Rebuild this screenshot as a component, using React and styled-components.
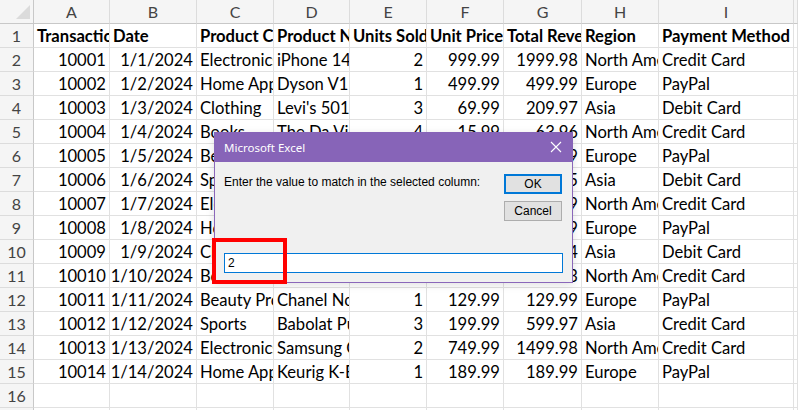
import styled, { createGlobalStyle } from 'styled-components';

const GlobalStyle = createGlobalStyle`
	html, body {
		margin: 0;
		padding: 0;
		background: #fff;
	}
	body {
		width: 798px;
		height: 410px;
		overflow: hidden;
	}
`;

const columns = ['A', 'B', 'C', 'D', 'E', 'F', 'G', 'H', 'I'];

// right aligned columns (numbers and dates)
const numericCols = [0, 1, 4, 5, 6];

const headers = [
	'Transaction ID',
	'Date',
	'Product Category',
	'Product Name',
	'Units Sold',
	'Unit Price',
	'Total Revenue',
	'Region',
	'Payment Method',
];

const rows = [
	['10001', '1/1/2024', 'Electronics', 'iPhone 14 Pro', '2', '999.99', '1999.98', 'North America', 'Credit Card'],
	['10002', '1/2/2024', 'Home Appliances', 'Dyson V11 Vacuum', '1', '499.99', '499.99', 'Europe', 'PayPal'],
	['10003', '1/3/2024', 'Clothing', "Levi's 501 Jeans", '3', '69.99', '209.97', 'Asia', 'Debit Card'],
	['10004', '1/4/2024', 'Books', 'The Da Vinci Code', '4', '15.99', '63.96', 'North America', 'Credit Card'],
	['10005', '1/5/2024', 'Beauty Products', 'Lancome Serum', '1', '89.99', '89.99', 'Europe', 'PayPal'],
	['10006', '1/6/2024', 'Sports', 'Wilson Evolution', '3', '29.95', '89.85', 'Asia', 'Debit Card'],
	['10007', '1/7/2024', 'Electronics', 'MacBook Pro 16', '1', '2499.99', '2499.99', 'North America', 'Credit Card'],
	['10008', '1/8/2024', 'Home Appliances', 'Blueair Classic', '1', '599.99', '599.99', 'Europe', 'PayPal'],
	['10009', '1/9/2024', 'Clothing', 'Nike Air Force 1', '6', '90.99', '545.94', 'Asia', 'Debit Card'],
	['10010', '1/10/2024', 'Books', 'Atomic Habits', '7', '15.99', '111.93', 'North America', 'Credit Card'],
	['10011', '1/11/2024', 'Beauty Products', 'Chanel No. 5', '1', '129.99', '129.99', 'Europe', 'PayPal'],
	['10012', '1/12/2024', 'Sports', 'Babolat Pure Drive', '3', '199.99', '599.97', 'Asia', 'Credit Card'],
	['10013', '1/13/2024', 'Electronics', 'Samsung Galaxy S23', '2', '749.99', '1499.98', 'North America', 'Credit Card'],
	['10014', '1/14/2024', 'Home Appliances', 'Keurig K-Elite', '1', '189.99', '189.99', 'Europe', 'PayPal'],
];

const App = () => {
	const totalRows = 17;
	const body = [];
	for (let r = 1; r <= totalRows; r++) {
		let values = null;
		if (r === 1) values = headers;
		else if (rows[r - 2]) values = rows[r - 2];
		body.push(<RowHeader key={`h${r}`}>{r}</RowHeader>);
		for (let c = 0; c < columns.length; c++) {
			const v = values ? values[c] : '';
			body.push(
				<Cell key={`${r}-${c}`} $bold={r === 1} $right={r !== 1 && numericCols.includes(c)}>
					{v}
				</Cell>
			);
		}
		body.push(<Cell key={`${r}-x`} />);
	}

	return (
		<>
			<GlobalStyle />
			<Sheet>
				<Grid>
					<Corner>
						<svg width="16" height="16" viewBox="0 0 16 16">
							<polygon points="15,1 15,15 1,15" fill="#dbdbdb" />
						</svg>
					</Corner>
					{columns.map((c) => (
						<ColHeader key={c}>{c}</ColHeader>
					))}
					<ColHeader />
					{body}
				</Grid>

				<Dialog>
					<TitleBar>
						<Title>Microsoft Excel</Title>
						<CloseButton>
							<svg width="12" height="12" viewBox="0 0 12 12">
								<path d="M1 1 L11 11 M11 1 L1 11" stroke="#fff" strokeWidth="1.1" />
							</svg>
						</CloseButton>
					</TitleBar>
					<DialogBody>
						<TopRow>
							<Prompt>Enter the value to match in the selected column:</Prompt>
							<Buttons>
								<Button $primary>OK</Button>
								<Button>Cancel</Button>
							</Buttons>
						</TopRow>
						<Input>2</Input>
					</DialogBody>
				</Dialog>

				<Highlight />
			</Sheet>
		</>
	);
};

const Sheet = styled.div`
	position: relative;
	width: 798px;
	height: 410px;
	overflow: hidden;
	font-family: Lato, 'Noto Sans', sans-serif;
`;

const Grid = styled.div`
	display: grid;
	grid-template-columns: 34px 76px 87px 77px 76px 77px 77px 78px 77px 135px 1fr;
	grid-auto-rows: 24px;
`;

const Corner = styled.div`
	background: #f5f5f5;
	border-right: 1px solid #c8c8c8;
	border-bottom: 1px solid #c8c8c8;
	box-sizing: border-box;
	display: flex;
	align-items: flex-end;
	justify-content: flex-end;
	padding: 0 2px 3px 0;
`;

const ColHeader = styled.div`
	background: #f5f5f5;
	border-right: 1px solid #dcdcdc;
	border-bottom: 1px solid #c8c8c8;
	box-sizing: border-box;
	color: #444;
	font-size: 16px;
	line-height: 24px;
	text-align: center;
`;

const RowHeader = styled.div`
	background: #f5f5f5;
	border-right: 1px solid #c8c8c8;
	border-bottom: 1px solid #dcdcdc;
	box-sizing: border-box;
	color: #444;
	font-size: 16px;
	line-height: 24px;
	text-align: center;
`;

const Cell = styled.div`
	border-right: 1px solid #e1e1e1;
	border-bottom: 1px solid #e1e1e1;
	box-sizing: border-box;
	color: #000;
	font-size: 16.6px;
	font-weight: ${(p) => (p.$bold ? 700 : 400)};
	line-height: 24px;
	white-space: nowrap;
	overflow: hidden;
	text-align: ${(p) => (p.$right ? 'right' : 'left')};
	padding: ${(p) => (p.$right ? '0 3px 0 0' : '0 0 0 3px')};
`;

const Dialog = styled.div`
	position: absolute;
	left: 214px;
	top: 132px;
	width: 359px;
	height: 151px;
	box-sizing: border-box;
	border: 1px solid #8a67ba;
	border-top: none;
	background: #f0f0f0;
	display: flex;
	flex-direction: column;
	box-shadow: 0 2px 8px rgba(0, 0, 0, 0.12);
`;

const TitleBar = styled.div`
	height: 30px;
	margin: 0 -1px;
	background: #8764b8;
	display: flex;
	align-items: center;
	justify-content: space-between;
	padding: 0 11px 0 10px;
`;

const Title = styled.span`
	color: #fff;
	font-family: 'Noto Sans', 'Liberation Sans', sans-serif;
	font-size: 11.5px;
`;

const CloseButton = styled.span`
	display: flex;
	align-items: center;
`;

const DialogBody = styled.div`
	flex: 1;
	display: flex;
	flex-direction: column;
	padding: 12px 9px 9px 9px;
	font-family: 'Liberation Sans', Arial, sans-serif;
	font-size: 12px;
	color: #000;
`;

const TopRow = styled.div`
	display: flex;
	justify-content: space-between;
	align-items: flex-start;
`;

const Prompt = styled.div`
	padding-top: 1px;
	line-height: 14px;
`;

const Buttons = styled.div`
	display: flex;
	flex-direction: column;
	gap: 7px;
	margin-right: 1px;
`;

const Button = styled.div`
	width: 58px;
	height: 20px;
	box-sizing: border-box;
	background: #e1e1e1;
	border: ${(p) => (p.$primary ? '2px solid #0078d7' : '1px solid #adadad')};
	display: flex;
	align-items: center;
	justify-content: center;
	font-size: 12px;
`;

const Input = styled.div`
	margin-top: auto;
	height: 20px;
	box-sizing: border-box;
	background: #fff;
	border: 1px solid #0078d7;
	padding: 0 3px;
	line-height: 18px;
	font-size: 12px;
`;

const Highlight = styled.div`
	position: absolute;
	left: 212px;
	top: 238px;
	width: 75px;
	height: 46px;
	box-sizing: border-box;
	border: 4px solid #ff0000;
`;

export default App;
